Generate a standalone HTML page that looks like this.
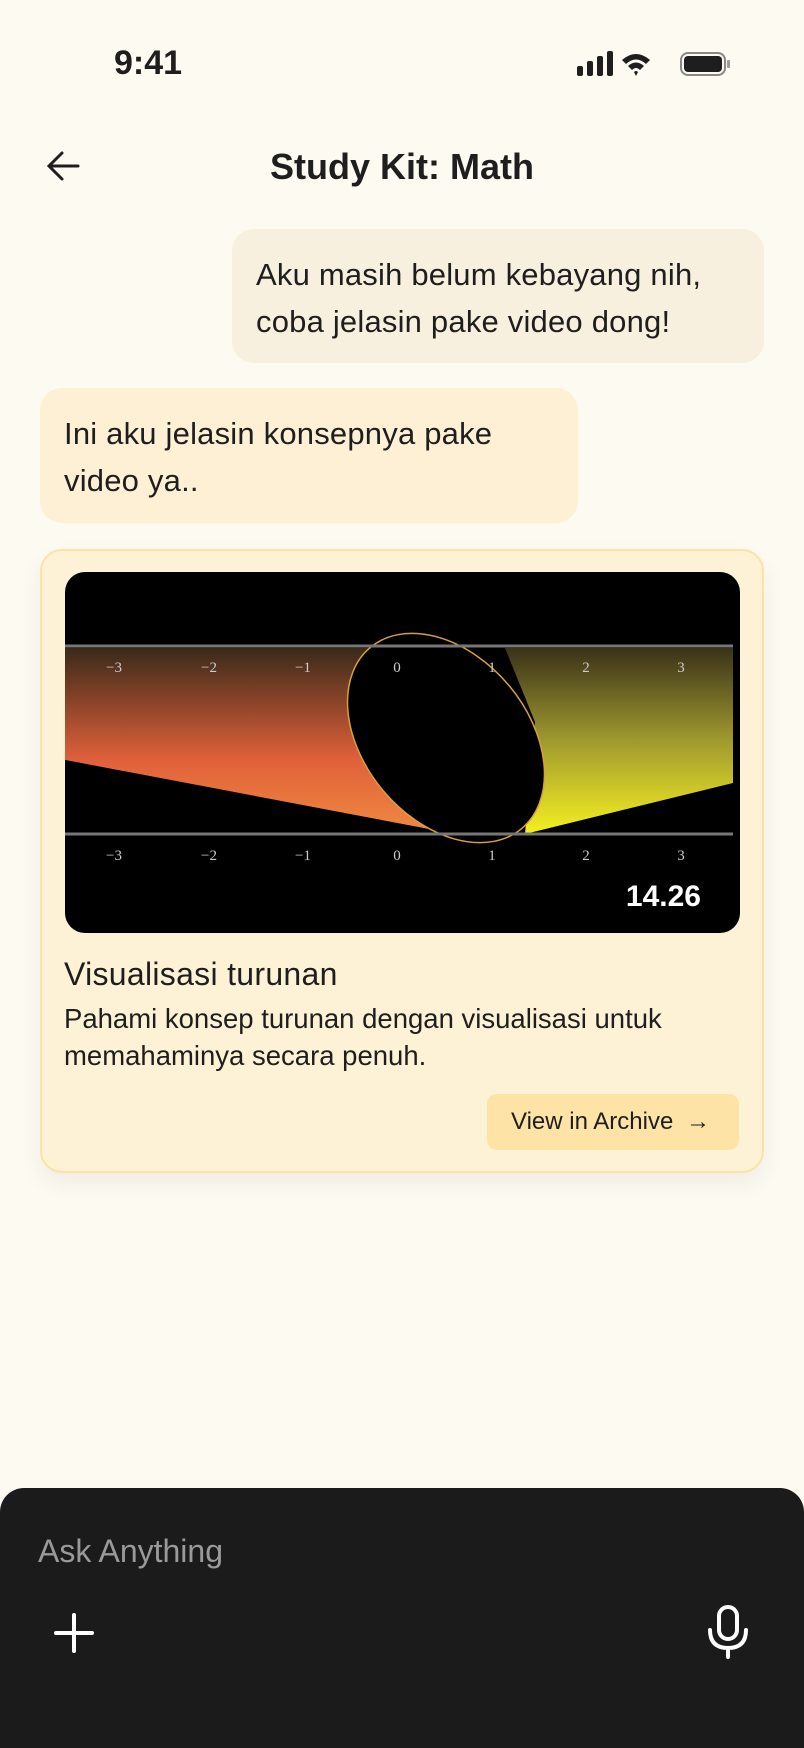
<!DOCTYPE html>
<html><head><meta charset="utf-8"><style>
*{margin:0;padding:0;box-sizing:border-box}
body{width:804px;height:1748px;background:#fdfaf2;font-family:"Liberation Sans",sans-serif;color:#1e1e1e;position:relative;overflow:hidden}
.abs{position:absolute}
.b{font-size:31px;line-height:47px;letter-spacing:0.2px}
</style></head><body>
<div class="abs" style="left:114px;top:44px;font-size:34px;font-weight:bold;">9:41</div>
<svg class="abs" style="left:575px;top:50px" width="160" height="30" viewBox="0 0 160 30">
<rect x="2" y="16" width="6" height="10" rx="2" fill="#1e1e1e"/><rect x="12" y="11" width="6" height="15" rx="2" fill="#1e1e1e"/><rect x="22" y="6" width="6" height="20" rx="2" fill="#1e1e1e"/><rect x="32" y="1" width="6" height="25" rx="2" fill="#1e1e1e"/>
<path d="M47 10 Q61 -2 75 10 L71 14 Q61 5 51 14Z M53 16 Q61 9 69 16 L65 20 Q61 16 57 20Z M59 22 L61 26 L63 22 Q61 20 59 22Z" fill="#1e1e1e"/>
<rect x="106" y="3" width="44" height="22" rx="7" fill="none" stroke="#888" stroke-width="2"/><rect x="109" y="6" width="38" height="16" rx="4" fill="#1e1e1e"/><rect x="152" y="10" width="3" height="8" rx="1" fill="#999"/>
</svg>
<svg class="abs" style="left:46px;top:150px" width="36" height="32" viewBox="0 0 36 32"><path d="M32 16H4M16 3L3 16L16 29" fill="none" stroke="#1e1e1e" stroke-width="3" stroke-linecap="round"/></svg>
<div class="abs" style="left:0;width:804px;top:146px;text-align:center;font-size:36px;font-weight:bold;letter-spacing:0px">Study Kit: Math</div>

<div class="abs b" style="left:232px;top:229px;width:532px;height:134px;background:#f8f0de;border-radius:22px;padding:22px 24px">Aku masih belum kebayang nih,<br>coba jelasin pake video dong!</div>
<div class="abs b" style="left:40px;top:388px;width:538px;height:135px;background:#fdf0d4;border-radius:22px;padding:22px 24px">Ini aku jelasin konsepnya pake<br>video ya..</div>

<div class="abs" style="left:40px;top:549px;width:724px;height:624px;background:#fef2d6;border:2px solid #fbe2a6;border-radius:22px;box-shadow:0 10px 24px rgba(0,0,0,0.06)"></div>
<svg class="abs" style="left:65px;top:572px;border-radius:20px" width="675" height="361" viewBox="0 0 675 361">
<defs>
<linearGradient id="gl" x1="0" y1="0" x2="0" y2="1"><stop offset="0" stop-color="#3a2a1a"/><stop offset="0.6" stop-color="#e0603a"/><stop offset="1" stop-color="#f08a40"/></linearGradient>
<linearGradient id="gr" x1="0" y1="0" x2="0" y2="1"><stop offset="0" stop-color="#3a3218"/><stop offset="0.5" stop-color="#a09a30"/><stop offset="1" stop-color="#f5f020"/></linearGradient>
</defs>
<rect width="675" height="361" fill="#000"/>
<polygon points="0,76 340,76 300,150 390,262 0,188" fill="url(#gl)"/>
<polygon points="440,76 668,76 668,211 460,262 470,150" fill="url(#gr)"/>
<polygon points="0,188 390,262 0,262" fill="#000"/>
<ellipse cx="381" cy="166" rx="82" ry="118" transform="rotate(-40 381 166)" fill="#000" stroke="#d8a040" stroke-width="1.5"/>
<line x1="0" y1="74" x2="668" y2="74" stroke="#777" stroke-width="3"/>
<line x1="0" y1="262" x2="668" y2="262" stroke="#777" stroke-width="3"/>
<g fill="#ccc" font-family="Liberation Serif" font-size="15" text-anchor="middle">
<text x="49" y="100">−3</text><text x="144" y="100">−2</text><text x="238" y="100">−1</text><text x="332" y="100">0</text><text x="427" y="100">1</text><text x="521" y="100">2</text><text x="616" y="100">3</text>
<text x="49" y="288">−3</text><text x="144" y="288">−2</text><text x="238" y="288">−1</text><text x="332" y="288">0</text><text x="427" y="288">1</text><text x="521" y="288">2</text><text x="616" y="288">3</text>
</g>
<text x="636" y="334" fill="#fff" font-size="30" font-weight="bold" text-anchor="end">14.26</text>
</svg>
<div class="abs" style="left:64px;top:956px;font-size:32px;letter-spacing:0.3px">Visualisasi turunan</div>
<div class="abs" style="left:64px;top:1000px;font-size:27.5px;line-height:37px;letter-spacing:0px">Pahami konsep turunan dengan visualisasi untuk<br>memahaminya secara penuh.</div>
<div class="abs" style="left:487px;top:1094px;width:252px;height:56px;background:#fde3a6;border-radius:10px;font-size:24px;line-height:56px;padding-left:24px">View in Archive <span style="margin-left:6px">→</span></div>

<div class="abs" style="left:0;top:1488px;width:804px;height:260px;background:#1b1b1b;border-radius:24px 24px 0 0"></div>
<div class="abs" style="left:38px;top:1533px;font-size:32px;color:#9a9a9a">Ask Anything</div>
<svg class="abs" style="left:52px;top:1611px" width="44" height="44"><path d="M22 4V40M4 22H40" stroke="#fff" stroke-width="4" stroke-linecap="round"/></svg>
<svg class="abs" style="left:705px;top:1604px" width="46" height="56" viewBox="0 0 46 56"><rect x="14" y="3" width="18" height="32" rx="9" fill="none" stroke="#fff" stroke-width="4"/><path d="M5 26Q5 44 23 44Q41 44 41 26M23 44V53" fill="none" stroke="#fff" stroke-width="4" stroke-linecap="round"/></svg>
</body></html>
